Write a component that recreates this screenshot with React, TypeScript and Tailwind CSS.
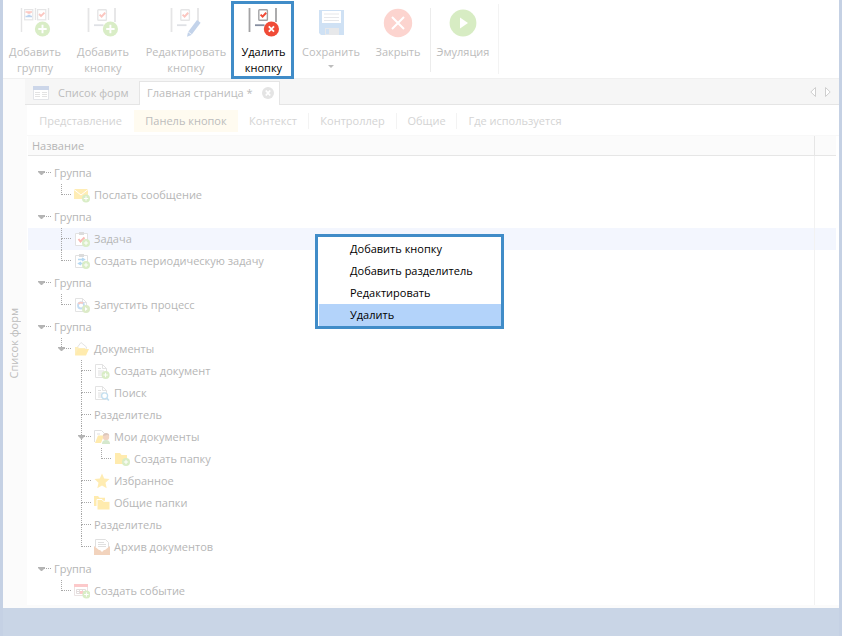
import type { ReactNode } from 'react';
import { clsx } from 'clsx';

type Palette = { line: string; shelf: string; check: string };

const FADED: Palette = { line: '#e5e5e6', shelf: '#dfe1e5', check: '#fbc6c0' };
const VIVID: Palette = { line: '#a3a3a5', shelf: '#868ea0', check: '#f04b37' };

/** Toolbar slot with a checked task in it; the badge goes in the lower right corner. */
function SlotIcon({ palette, children }: { palette: Palette; children: ReactNode }) {
  return (
    <svg aria-hidden width="32" height="32" viewBox="0 0 32 32" fill="none">
      <path d="M1.5 1v24M28 1v14" stroke={palette.line} strokeWidth="1.8" />
      <rect x="10.8" y="2.8" width="8.6" height="10.4" rx="0.8" stroke={palette.line} strokeWidth="1.4" />
      <path d="m12.6 7.6 2 2 3.6-3.8" stroke={palette.check} strokeWidth="2" />
      <path d="M7 18.2h9.5" stroke={palette.shelf} strokeWidth="1.8" />
      {children}
    </svg>
  );
}

function PlusBadge({ x, y, r }: { x: number; y: number; r: number }) {
  const arm = r * 0.55;
  return (
    <>
      <circle cx={x} cy={y} r={r} fill="#d9edc6" />
      <path d={`M${x - arm} ${y}h${arm * 2}M${x} ${y - arm}v${arm * 2}`} stroke="#fff" strokeWidth={r / 4} />
    </>
  );
}

function GroupIcon() {
  return (
    <svg aria-hidden width="32" height="32" viewBox="0 0 32 32" fill="none">
      <path d="M2.5 1v24M16.5 1v12M29.5 1v12" stroke="#e5e5e6" strokeWidth="1.4" />
      <rect x="5.6" y="2.6" width="8.2" height="10.2" stroke="#e5e5e6" strokeWidth="1.2" />
      <rect x="18.6" y="2.6" width="8.2" height="10.2" stroke="#e5e5e6" strokeWidth="1.2" />
      <path d="M6.5 5h6.5M8.5 6h3" stroke="#fbc6c0" strokeWidth="1.6" />
      <path d="M6.5 9.5h6.5M8.5 8.5h3" stroke="#bcd3ee" strokeWidth="1.6" />
      <path d="m20 7 2 2 3.4-3.4" stroke="#fbc6c0" strokeWidth="1.8" />
      <PlusBadge x={23.5} y={22} r={7.6} />
    </svg>
  );
}

function SaveIcon() {
  return (
    <svg aria-hidden width="32" height="32" viewBox="0 0 32 32">
      <path d="M4 3h25v25H6l-2-2z" fill="#cfe1f4" />
      <path d="M7 4h19v12H7z" fill="#fff" />
      <path d="M9 7h15M9 10.5h15M9 13.5h15" stroke="#e6e7ea" />
      <path d="M10 21h14v7H10z" fill="#e7e8ea" />
      <path d="M11 22h3v5h-3z" fill="#cfe1f4" />
    </svg>
  );
}

function CloseIcon() {
  return (
    <svg aria-hidden width="32" height="32" viewBox="0 0 32 32">
      <circle cx="16" cy="16" r="14.2" fill="#fcd4cf" />
      <path d="m10 10 12 12M22 10 10 22" stroke="#fff" strokeWidth="2" />
    </svg>
  );
}

function PlayIcon() {
  return (
    <svg aria-hidden width="32" height="32" viewBox="0 0 32 32">
      <circle cx="16" cy="16" r="13.4" fill="#d7ecc3" />
      <path d="m13 10.5 8 5.5-8 5.5z" fill="#fff" />
    </svg>
  );
}

function ToolButton({
  icon,
  lines,
  className,
  highlighted = false,
  dropdown = false,
}: {
  icon: ReactNode;
  lines: string[];
  className: string;
  highlighted?: boolean;
  dropdown?: boolean;
}) {
  return (
    <button
      type="button"
      className={clsx(
        'flex shrink-0 flex-col items-center gap-[5px] whitespace-nowrap leading-4',
        highlighted
          ? 'relative mt-px -mb-px border-[3px] border-[#408cc8] pt-[3px] text-black'
          : 'pt-[7px] text-[#bcbcbc]',
        className,
      )}
    >
      {icon}
      <span className="flex flex-col items-center">
        {lines.map((line) => (
          <span key={line}>{line}</span>
        ))}
        {dropdown && (
          <svg aria-hidden width="6" height="3" className="mt-[5px]">
            <path d="M0 0h6L3 3z" fill="#bdbdbd" />
          </svg>
        )}
      </span>
    </button>
  );
}

function Toolbar() {
  return (
    <header className="flex h-[79px] shrink-0 border-b border-[#f0f0f0] bg-white">
      <ToolButton className="w-16" lines={['Добавить', 'группу']} icon={<GroupIcon />} />
      <ToolButton
        className="w-[72px]"
        lines={['Добавить', 'кнопку']}
        icon={
          <SlotIcon palette={FADED}>
            <PlusBadge x={23.4} y={22} r={7.6} />
          </SlotIcon>
        }
      />
      <ToolButton
        className="w-[92px] pl-0.5"
        lines={['Редактировать', 'кнопку']}
        icon={
          <SlotIcon palette={FADED}>
            <path d="m18 25 9-12 3.6 2.8L21.4 28l-4.4 1.8z" fill="#c3d3ea" />
            <path d="m17.8 24.6 4 3" stroke="#fff" strokeWidth="0.8" />
          </SlotIcon>
        }
      />
      <ToolButton
        className="w-[63px] pl-0.5"
        highlighted
        lines={['Удалить', 'кнопку']}
        icon={
          <SlotIcon palette={VIVID}>
            <circle cx="23.4" cy="22" r="7.6" fill="#f04b37" />
            <path d="m20.8 19.4 5.2 5.2M26 19.4l-5.2 5.2" stroke="#fff" strokeWidth="1.8" />
          </SlotIcon>
        }
      />
      <ToolButton className="w-[74px]" lines={['Сохранить']} icon={<SaveIcon />} dropdown />
      <ToolButton className="w-[60px]" lines={['Закрыть']} icon={<CloseIcon />} />
      <span className="mt-2 mb-1.5 ml-0.5 w-px bg-[#ececec]" />
      <ToolButton className="w-16" lines={['Эмуляция']} icon={<PlayIcon />} />
      <span className="mt-1 mb-1 ml-[3px] w-px bg-[#f3f3f3]" />
    </header>
  );
}

type IconName =
  | 'mail'
  | 'task'
  | 'periodic'
  | 'process'
  | 'folderOpen'
  | 'docAdd'
  | 'docSearch'
  | 'myDocs'
  | 'folderAdd'
  | 'star'
  | 'folders'
  | 'archive'
  | 'event';

const page = <path d="M1.5 1.5h7l4 4v9h-11zM8.5 1.5v4h4" fill="none" stroke="#e3e3e3" />;
const pageLines = <path d="M4 5.5h3M4 8h6M4 10h6M4 12h5" stroke="#e0e0e0" />;
const clipboard = (
  <>
    <path d="M1.5 2.5h12v12h-12z" fill="#fff" stroke="#e2e2e2" />
    <path d="M5 1h5v3H5z" fill="#dcdcdc" />
  </>
);

const ICONS: Record<IconName, ReactNode> = {
  mail: (
    <>
      <path d="M0 2h14v10H0z" fill="#ffedb5" />
      <path d="m0 2.5 7 5.5 7-5.5" fill="none" stroke="#fff" />
      <PlusBadge x={12} y={11.5} r={4} />
    </>
  ),
  task: (
    <>
      {clipboard}
      <path d="m4.5 8 2 2.5 4-4" fill="none" stroke="#fbb9b4" strokeWidth="2" />
      <PlusBadge x={12} y={12} r={4} />
    </>
  ),
  periodic: (
    <>
      {clipboard}
      <path d="M4 6.5h6M8 5l2.5 1.5L8 8M10 10.5H5M7 9l-2.5 1.5L7 12" fill="none" stroke="#b5d8f2" strokeWidth="1.3" />
      <PlusBadge x={12} y={12} r={4} />
    </>
  ),
  process: (
    <>
      {page}
      <circle cx="7" cy="8.5" r="3" fill="none" stroke="#c3dcf3" strokeWidth="1.8" />
      <path d="M4.5 7A3 3 0 0 1 9 6.3" fill="none" stroke="#fbc9c0" strokeWidth="1.8" />
      <circle cx="12" cy="12" r="4" fill="#dcebc8" />
      <path d="M11 10v4l2.6-2z" fill="#fff" />
    </>
  ),
  folderOpen: (
    <>
      <path d="m2 8 5-6.5 5.5 4.5-1 4z" fill="#fff" stroke="#e4e4e4" />
      <path d="M1 6h3l1 1h6v7H1z" fill="#fdeebd" />
      <path d="M4 8h11l-3 6.5H1z" fill="#ffebae" />
    </>
  ),
  docAdd: (
    <>
      {page}
      {pageLines}
      <PlusBadge x={11.6} y={12} r={4} />
    </>
  ),
  docSearch: (
    <>
      {page}
      {pageLines}
      <circle cx="10.6" cy="10.8" r="3" fill="#fff" stroke="#c3dff0" strokeWidth="1.3" />
      <path d="m12.8 13 2 2.4" stroke="#c3dff0" strokeWidth="1.6" />
    </>
  ),
  myDocs: (
    <>
      <path d="M0.5 13V1.5h7l3 3M3 5h3" fill="none" stroke="#e0e0e0" />
      <path d="M4 6.5h6l-3 7.5H1z" fill="#ffebae" />
      <circle cx="12" cy="8" r="3.2" fill="#f1d5c4" />
      <path d="M9 7a3 3 0 0 1 6.2 0l-1.5-1.2z" fill="#dcc7bb" />
      <path d="M8 15q0-4 4-4t4 4z" fill="#d5e8cd" />
    </>
  ),
  folderAdd: (
    <>
      <path d="M1 2h5l1.5 2H13v9H1z" fill="#ffebae" />
      <PlusBadge x={12} y={11} r={4} />
    </>
  ),
  star: <path d="m8 .5 2.2 5 5.3.5-4 3.7 1.2 5.5L8 12.4l-4.7 2.8 1.2-5.5-4-3.7 5.3-.5z" fill="#ffecb2" />,
  folders: (
    <>
      <path d="M0 1h4l1.5 1.8H11V11H0z" fill="#ffebae" />
      <path d="M3 4.5h5l1.5 1.8H16V15H3z" fill="#ffebae" stroke="#fff" />
    </>
  ),
  archive: (
    <>
      <path d="M1.5 8V.5h10l3 3V9" fill="#fff" stroke="#e0e0e0" />
      <path d="M4 3.5h6M4 5.5h8M4 7.5h8" stroke="#e0e0e0" />
      <path d="m0 7 5 4h6l5-4v9H0z" fill="#f2d3bd" />
      <path d="M6 11h4l-2 2z" fill="#fff" />
    </>
  ),
  event: (
    <>
      <path d="M.5 3.5h13v9H.5z" fill="#fff" stroke="#ebe3e3" />
      <path d="M0 1h14v3H0z" fill="#fcc9ca" />
      <path d="M2.5 6.5h9v4h-9zM5.5 6.5v4M8.5 6.5v4M2.5 8.5h9" fill="none" stroke="#e3dcdc" />
      <path d="M6 8h3v3H6z" fill="#fcc9ca" />
      <PlusBadge x={12.4} y={11.5} r={4} />
    </>
  ),
};

type TreeNode = { label: string; icon?: IconName; selected?: boolean; children?: TreeNode[] };

const TREE: TreeNode[] = [
  { label: 'Группа', children: [{ label: 'Послать сообщение', icon: 'mail' }] },
  {
    label: 'Группа',
    children: [
      { label: 'Задача', icon: 'task', selected: true },
      { label: 'Создать периодическую задачу', icon: 'periodic' },
    ],
  },
  { label: 'Группа', children: [{ label: 'Запустить процесс', icon: 'process' }] },
  {
    label: 'Группа',
    children: [
      {
        label: 'Документы',
        icon: 'folderOpen',
        children: [
          { label: 'Создать документ', icon: 'docAdd' },
          { label: 'Поиск', icon: 'docSearch' },
          { label: 'Разделитель' },
          { label: 'Мои документы', icon: 'myDocs', children: [{ label: 'Создать папку', icon: 'folderAdd' }] },
          { label: 'Избранное', icon: 'star' },
          { label: 'Общие папки', icon: 'folders' },
          { label: 'Разделитель' },
          { label: 'Архив документов', icon: 'archive' },
        ],
      },
    ],
  },
  { label: 'Группа', children: [{ label: 'Создать событие', icon: 'event' }] },
];

/** One 20px indent step: optional line down from above, a branch to the right and a line further down. */
function Rail({ up, branch, down, arrow }: { up: boolean; branch: boolean; down: boolean; arrow?: boolean }) {
  return (
    <span aria-hidden className="relative flex h-full w-5 shrink-0 flex-col pl-2.5">
      <span
        className={clsx('h-[11px] border-dotted border-[#a8a8a8]', up && 'border-l', branch && 'border-b')}
      />
      <span className={clsx('h-[11px] border-dotted border-[#a8a8a8]', down && 'border-l')} />
      {arrow && (
        <svg width="7" height="4" className="absolute top-[9px] left-[7px]">
          <path d="M0 0h7v1L4 4H3L0 1z" fill="#b4b4b4" />
        </svg>
      )}
    </span>
  );
}

function TreeRows({ nodes, trail = [] }: { nodes: TreeNode[]; trail?: boolean[] }) {
  const depth = trail.length;
  return nodes.map((node, i) => {
    const hasNext = depth > 0 && i < nodes.length - 1;
    return (
      <li key={i} role="treeitem" aria-selected={!!node.selected}>
        <div className={clsx('flex h-[22px] items-center pl-[3px]', node.selected && 'bg-[#f3f6fe]')}>
          {trail.map((open, level) => (
            <Rail key={level} up={open} branch={false} down={open} />
          ))}
          <Rail up={depth > 0} branch down={hasNext} arrow={!!node.children} />
          {node.icon && (
            <svg aria-hidden width="16" height="16" viewBox="0 0 16 16" className="ml-[3px] shrink-0">
              {ICONS[node.icon]}
            </svg>
          )}
          <span className={clsx('flex-1 whitespace-nowrap', node.icon ? 'pl-1' : 'pl-[3px]')}>{node.label}</span>
          <span className="h-full w-[22px] shrink-0 border-l border-[#f2f2f2]" />
        </div>
        {node.children && (
          <ul role="group">
            <TreeRows nodes={node.children} trail={[...trail, hasNext]} />
          </ul>
        )}
      </li>
    );
  });
}

function ContextMenu() {
  const items = ['Добавить кнопку', 'Добавить разделитель', 'Редактировать', 'Удалить'];
  return (
    <div
      role="menu"
      className="absolute top-[98px] left-[287px] w-[189px] border-[3px] border-[#408cc8] bg-white pt-px pl-px text-black"
    >
      {items.map((item, i) => (
        <button
          key={item}
          type="button"
          role="menuitem"
          className={clsx('block h-[22px] w-full pl-[31px] text-left', i === items.length - 1 && 'bg-[#b3d3fa]')}
        >
          {item}
        </button>
      ))}
    </div>
  );
}

function PageTabs() {
  return (
    <div className="flex h-[26px] shrink-0 items-end border-b border-[#e5e5e5] bg-[#f6f6f6] text-[#bcbcbc]">
      <button type="button" className="flex h-[23px] w-[114px] items-center gap-[9px] pl-2 whitespace-nowrap">
        <svg aria-hidden width="16" height="14" viewBox="0 0 16 14" className="shrink-0">
          <path d="M.5.5h15v13H.5z" fill="#fff" stroke="#e3e5e9" />
          <path d="M0 0h16v4H0z" fill="#ccd6e9" />
          <path d="M2 6.5h5M2 8.5h5M2 10.5h5M9 6.5h5M9 8.5h5M9 10.5h5" stroke="#e3e3e3" />
        </svg>
        Список форм
      </button>
      <div className="-mb-px flex h-6 w-[141px] items-center justify-between border border-b-0 border-[#e5e5e5] bg-white pr-[5px] pb-0.5 pl-[7px]">
        <button type="button" className="whitespace-nowrap">
          Главная страница *
        </button>
        <button type="button" aria-label="Закрыть вкладку">
          <svg aria-hidden width="12" height="12" viewBox="0 0 12 12">
            <circle cx="6" cy="6" r="6" fill="#e4e4e4" />
            <path d="m3.8 3.5 4.4 5M8.2 3.5l-4.4 5" stroke="#fff" strokeWidth="1.8" />
          </svg>
        </button>
      </div>
      <div className="ml-auto flex gap-[9px] self-center pr-2">
        <button type="button" aria-label="Назад">
          <svg aria-hidden width="6" height="10" viewBox="0 0 6 10">
            <path d="M5.5.5v9L.8 5z" fill="#fff" stroke="#cfcfcf" />
          </svg>
        </button>
        <button type="button" aria-label="Вперёд">
          <svg aria-hidden width="6" height="10" viewBox="0 0 6 10">
            <path d="M.5.5v9L5.2 5z" fill="#fff" stroke="#cfcfcf" />
          </svg>
        </button>
      </div>
    </div>
  );
}

const SECTIONS = [
  { label: 'Представление', width: 'w-[107px]' },
  { label: 'Панель кнопок', width: 'w-[104px]', active: true },
  { label: 'Контекст', width: 'w-[71px]', divider: true },
  { label: 'Контроллер', width: 'w-[88px]', divider: true },
  { label: 'Общие', width: 'w-[60px]', divider: true },
  { label: 'Где используется', width: 'w-[116px]' },
];

function SectionTabs() {
  return (
    <nav className="flex h-[31px] shrink-0 items-center border-b border-[#f8f8f8] pt-0.5">
      {SECTIONS.map(({ label, width, active, divider }) => (
        <button
          key={label}
          type="button"
          className={clsx(
            'flex shrink-0 items-center justify-center whitespace-nowrap',
            width,
            active ? 'h-[22px] bg-[#fffbf0] text-[#bcbcbc]' : 'h-4 text-[#d4d4d4]',
            divider && 'border-r border-[#f3f3f3]',
          )}
        >
          {label}
        </button>
      ))}
    </nav>
  );
}

export default function App() {
  return (
    <div className="flex min-h-screen flex-col border-x-[3px] border-[#c5d1e4] bg-white font-['Open_Sans','Noto_Sans',sans-serif] text-[11px] leading-4">
      <Toolbar />
      <div className="flex flex-1">
        <aside className="flex w-[22px] shrink-0 items-center justify-center bg-[#fbfbfb] text-[#bcbcbc]">
          <button type="button" className="rotate-180 whitespace-nowrap [writing-mode:vertical-rl]">
            Список форм
          </button>
        </aside>
        <main className="flex min-w-0 flex-1 flex-col">
          <PageTabs />
          <div className="flex flex-1 flex-col border-b-[3px] border-l-2 border-[#fbfbfb]">
            <SectionTabs />
            <div className="relative ml-px flex flex-1 flex-col pr-[3px] text-[#b6b6b6]">
              <div className="flex h-5 shrink-0 border-b border-[#e6e6e6] bg-[#fbfbfb]">
                <span className="flex-1 pl-1 leading-5">Название</span>
                <span className="w-[22px] border-l border-[#e6e6e6]" />
              </div>
              <div className="flex h-1.5 justify-end">
                <span className="w-[22px] border-l border-[#f2f2f2]" />
              </div>
              <ul role="tree" aria-label="Название">
                <TreeRows nodes={TREE} />
              </ul>
              <div className="flex flex-1 justify-end">
                <span className="w-[22px] border-l border-[#f2f2f2]" />
              </div>
              <ContextMenu />
            </div>
          </div>
        </main>
      </div>
      <footer className="h-7 shrink-0 bg-[#c9d5e6]" />
    </div>
  );
}
